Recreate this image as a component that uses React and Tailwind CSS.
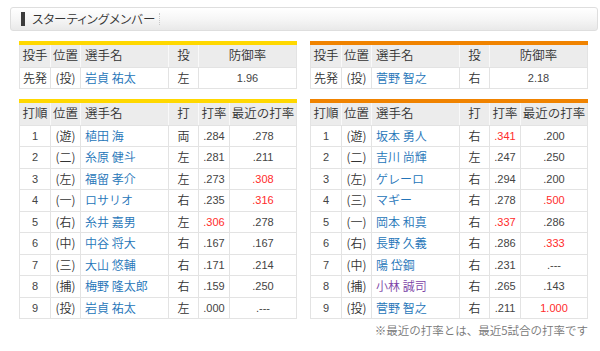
import React from "react";

const jp = { fontFamily: '"Noto Sans CJK JP", "Noto Sans", sans-serif' };
const num = { fontFamily: '"Liberation Sans", Arial, sans-serif' };

const pitchers = {
  left: { name: "岩貞 祐太", hand: "左", era: "1.96" },
  right: { name: "菅野 智之", hand: "右", era: "2.18" },
};

const leftBatters = [
  ["1", "遊", "植田 海", "両", ".284", false, ".278", false],
  ["2", "二", "糸原 健斗", "左", ".281", false, ".211", false],
  ["3", "左", "福留 孝介", "左", ".273", false, ".308", true],
  ["4", "一", "ロサリオ", "右", ".235", false, ".316", true],
  ["5", "右", "糸井 嘉男", "左", ".306", true, ".278", false],
  ["6", "中", "中谷 将大", "右", ".167", false, ".167", false],
  ["7", "三", "大山 悠輔", "右", ".171", false, ".214", false],
  ["8", "捕", "梅野 隆太郎", "右", ".159", false, ".250", false],
  ["9", "投", "岩貞 祐太", "左", ".000", false, ".---", false],
];

const rightBatters = [
  ["1", "遊", "坂本 勇人", "右", ".341", true, ".200", false],
  ["2", "二", "吉川 尚輝", "左", ".247", false, ".250", false],
  ["3", "左", "ゲレーロ", "右", ".294", false, ".200", false],
  ["4", "三", "マギー", "右", ".278", false, ".500", true],
  ["5", "一", "岡本 和真", "右", ".337", true, ".286", false],
  ["6", "右", "長野 久義", "右", ".286", false, ".333", true],
  ["7", "中", "陽 岱鋼", "右", ".231", false, ".---", false],
  ["8", "捕", "小林 誠司", "右", ".265", false, ".143", false, true],
  ["9", "投", "菅野 智之", "右", ".211", false, "1.000", true],
];

function Th({ children, className = "" }) {
  return (
    <th
      className={`h-[22px] p-0 font-[350] text-[12.5px] text-[#333] bg-[#ececec] border-x border-x-[#f9f9f9] border-b border-b-[#e3e3e3] first:border-l-[#e3e3e3] last:border-r-[#e3e3e3] ${className}`}
      style={jp}
    >
      {children}
    </th>
  );
}

function Td({ children, className = "", style }) {
  return (
    <td
      className={`h-[21.5px] p-0 border border-[#e3e3e3] ${className}`}
      style={style}
    >
      {children}
    </td>
  );
}

const jpCell = "font-[350] text-[12px] text-[#333]";

function PitcherTable({ color, p }) {
  return (
    <div>
      <div className={`h-[4px] ${color}`} />
      <table className="w-[278px] border-collapse table-fixed">
        <colgroup>
          <col className="w-[31px]" />
          <col className="w-[30px]" />
          <col className="w-[88px]" />
          <col className="w-[30px]" />
          <col />
        </colgroup>
        <thead>
          <tr>
            <Th>投手</Th>
            <Th>位置</Th>
            <Th className="text-left pl-[4px]">選手名</Th>
            <Th>投</Th>
            <Th>防御率</Th>
          </tr>
        </thead>
        <tbody>
          <tr>
            <Td className={`text-center ${jpCell}`} style={jp}>先発</Td>
            <Td className={`text-center ${jpCell}`} style={jp}>(投)</Td>
            <Td className="pl-[4px] font-[350] text-[12px] text-[#2374b8]" style={jp}>{p.name}</Td>
            <Td className={`text-center ${jpCell}`} style={jp}>{p.hand}</Td>
            <Td className="text-center text-[11px] text-[#444]" style={num}>{p.era}</Td>
          </tr>
        </tbody>
      </table>
    </div>
  );
}

function BatterTable({ color, rows }) {
  return (
    <div>
      <div className={`h-[4px] ${color}`} />
      <table className="w-[278px] border-collapse table-fixed">
        <colgroup>
          <col className="w-[31px]" />
          <col className="w-[30px]" />
          <col className="w-[88px]" />
          <col className="w-[30px]" />
          <col className="w-[31px]" />
          <col />
        </colgroup>
        <thead>
          <tr>
            <Th>打順</Th>
            <Th>位置</Th>
            <Th className="text-left pl-[4px]">選手名</Th>
            <Th>打</Th>
            <Th>打率</Th>
            <Th>最近の打率</Th>
          </tr>
        </thead>
        <tbody>
          {rows.map((r) => (
            <tr key={r[0]}>
              <Td className="text-center text-[11px] text-[#444]" style={num}>{r[0]}</Td>
              <Td className={`text-center ${jpCell}`} style={jp}>({r[1]})</Td>
              <Td
                className={`pl-[4px] font-[350] text-[12px] ${r[8] ? "text-[#7b3fa6]" : "text-[#2374b8]"}`}
                style={jp}
              >
                {r[2]}
              </Td>
              <Td className={`text-center ${jpCell}`} style={jp}>{r[3]}</Td>
              <Td
                className={`text-center text-[11px] ${r[5] ? "text-[#ff2b2b]" : "text-[#444]"}`}
                style={num}
              >
                {r[4]}
              </Td>
              <Td
                className={`text-center text-[11px] ${r[7] ? "text-[#ff2b2b]" : "text-[#444]"}`}
                style={num}
              >
                {r[6]}
              </Td>
            </tr>
          ))}
        </tbody>
      </table>
    </div>
  );
}

export default function App() {
  return (
    <div className="w-[600px] h-[351px] bg-white overflow-hidden pt-[7px]">
      <div className="ml-[10px] w-[588px] h-[24px] rounded-[3px] border border-[#dedede] bg-gradient-to-b from-[#ffffff] via-[#f6f6f6] to-[#e9e9e9] flex items-center pl-[10px]">
        <div className="w-[4px] h-[14px] bg-[#3c3c3c]" />
        <span
          className="ml-[7px] font-[350] text-[12.5px] text-[#333] leading-none"
          style={{ ...jp, fontFeatureSettings: '"palt"' }}
        >
          スターティングメンバー
        </span>
        <div className="ml-[4px] h-[12px] border-l border-dotted border-[#c8c8c8]" />
      </div>

      <div className="mt-[10px] pl-[19px] flex gap-[13px]">
        <div className="flex flex-col gap-[10px]">
          <PitcherTable color="bg-[#ffd800]" p={pitchers.left} />
          <BatterTable color="bg-[#ffd800]" rows={leftBatters} />
        </div>
        <div className="flex flex-col">
          <div className="flex flex-col gap-[10px]">
            <PitcherTable color="bg-[#f08300]" p={pitchers.right} />
            <BatterTable color="bg-[#f08300]" rows={rightBatters} />
          </div>
          <div
            className="mt-[3px] text-right font-[350] text-[11.5px] text-[#777]"
            style={jp}
          >
            ※最近の打率とは、最近5試合の打率です
          </div>
        </div>
      </div>
    </div>
  );
}
